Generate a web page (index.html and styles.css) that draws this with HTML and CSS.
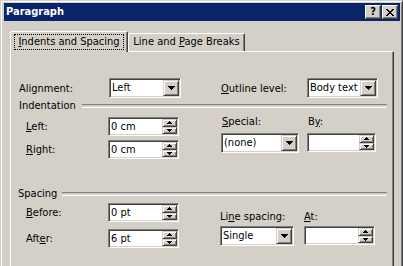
FILE: index.html
```html
<!DOCTYPE html>
<html>
<head>
<meta charset="utf-8">
<link rel="stylesheet" href="styles.css">
</head>
<body>
<div class="dlg">
  <div class="title">
    <span class="title-text">Paragraph</span>
    <div class="tbtns">
      <span class="tbtn help">?</span>
      <span class="tbtn"><svg width="8" height="7" viewBox="0 0 8 7"><path d="M0 0h2v1H0zM6 0h2v1H6zM1 1h2v1H1zM5 1h2v1H5zM2 2h4v1H2zM3 3h2v1H3zM2 4h4v1H2zM1 5h2v1H1zM5 5h2v1H5zM0 6h2v1H0zM6 6h2v1H6z" fill="#000"/></svg></span>
    </div>
  </div>
  <div class="body">
    <div class="tabs">
      <div class="tab active"><span class="focus"><u>I</u>ndents and Spacing</span></div>
      <div class="tab second">Line and <u>P</u>age Breaks</div>
    </div>
    <div class="page">
      <div class="row1">
        <span class="lbl w90">Alignment:</span>
        <div class="sel w72"><span class="val">Left</span><span class="dd"><svg width="7" height="4" viewBox="0 0 7 4"><path d="M0 0h7v1H0zM1 1h5v1H1zM2 2h3v1H2zM3 3h1v1H3z" fill="#000"/></svg></span></div>
        <span class="lbl outline"><u>O</u>utline level:</span>
        <div class="sel w71"><span class="val">Body text</span><span class="dd"><svg width="7" height="4" viewBox="0 0 7 4"><path d="M0 0h7v1H0zM1 1h5v1H1zM2 2h3v1H2zM3 3h1v1H3z" fill="#000"/></svg></span></div>
      </div>

      <div class="hdr hdr-ind">Indentation</div>

      <div class="sec sec-ind">
        <div class="lcol lcol-ind">
          <div class="lrow"><span class="lbl2"><u>L</u>eft:</span>
            <div class="spin w71"><span class="val">0 cm</span><span class="arr"><span class="sb"><svg width="5" height="3" viewBox="0 0 5 3"><path d="M2 0h1v1H2zM1 1h3v1H1zM0 2h5v1H0z" fill="#000"/></svg></span><span class="sb"><svg width="5" height="3" viewBox="0 0 5 3"><path d="M0 0h5v1H0zM1 1h3v1H1zM2 2h1v1H2z" fill="#000"/></svg></span></span></div>
          </div>
          <div class="lrow"><span class="lbl2"><u>R</u>ight:</span>
            <div class="spin w71"><span class="val">0 cm</span><span class="arr"><span class="sb"><svg width="5" height="3" viewBox="0 0 5 3"><path d="M2 0h1v1H2zM1 1h3v1H1zM0 2h5v1H0z" fill="#000"/></svg></span><span class="sb"><svg width="5" height="3" viewBox="0 0 5 3"><path d="M0 0h5v1H0zM1 1h3v1H1zM2 2h1v1H2z" fill="#000"/></svg></span></span></div>
          </div>
        </div>
        <div class="rcol rcol-ind">
          <div class="rlabels">
            <span class="lbl special"><u>S</u>pecial:</span>
            <span class="lbl by">B<u>y</u>:</span>
          </div>
          <div class="rctrls">
            <div class="sel w78"><span class="val">(none)</span><span class="dd"><svg width="7" height="4" viewBox="0 0 7 4"><path d="M0 0h7v1H0zM1 1h5v1H1zM2 2h3v1H2zM3 3h1v1H3z" fill="#000"/></svg></span></div>
            <div class="spin w69 gap8"><span class="val"></span><span class="arr"><span class="sb"><svg width="5" height="3" viewBox="0 0 5 3"><path d="M2 0h1v1H2zM1 1h3v1H1zM0 2h5v1H0z" fill="#000"/></svg></span><span class="sb"><svg width="5" height="3" viewBox="0 0 5 3"><path d="M0 0h5v1H0zM1 1h3v1H1zM2 2h1v1H2z" fill="#000"/></svg></span></span></div>
          </div>
        </div>
      </div>

      <div class="hdr hdr-sp">Spacing</div>

      <div class="sec sec-sp">
        <div class="lcol lcol-sp">
          <div class="lrow"><span class="lbl2"><u>B</u>efore:</span>
            <div class="spin w71"><span class="val">0 pt</span><span class="arr"><span class="sb"><svg width="5" height="3" viewBox="0 0 5 3"><path d="M2 0h1v1H2zM1 1h3v1H1zM0 2h5v1H0z" fill="#000"/></svg></span><span class="sb"><svg width="5" height="3" viewBox="0 0 5 3"><path d="M0 0h5v1H0zM1 1h3v1H1zM2 2h1v1H2z" fill="#000"/></svg></span></span></div>
          </div>
          <div class="lrow"><span class="lbl2">Aft<u>e</u>r:</span>
            <div class="spin w71"><span class="val">6 pt</span><span class="arr"><span class="sb"><svg width="5" height="3" viewBox="0 0 5 3"><path d="M2 0h1v1H2zM1 1h3v1H1zM0 2h5v1H0z" fill="#000"/></svg></span><span class="sb"><svg width="5" height="3" viewBox="0 0 5 3"><path d="M0 0h5v1H0zM1 1h3v1H1zM2 2h1v1H2z" fill="#000"/></svg></span></span></div>
          </div>
        </div>
        <div class="rcol rcol-sp">
          <div class="rlabels">
            <span class="lbl linesp">Li<u>n</u>e spacing:</span>
            <span class="lbl"><u>A</u>t:</span>
          </div>
          <div class="rctrls">
            <div class="sel w74"><span class="val">Single</span><span class="dd"><svg width="7" height="4" viewBox="0 0 7 4"><path d="M0 0h7v1H0zM1 1h5v1H1zM2 2h3v1H2zM3 3h1v1H3z" fill="#000"/></svg></span></div>
            <div class="spin w71 gap10"><span class="val"></span><span class="arr"><span class="sb"><svg width="5" height="3" viewBox="0 0 5 3"><path d="M2 0h1v1H2zM1 1h3v1H1zM0 2h5v1H0z" fill="#000"/></svg></span><span class="sb"><svg width="5" height="3" viewBox="0 0 5 3"><path d="M0 0h5v1H0zM1 1h3v1H1zM2 2h1v1H2z" fill="#000"/></svg></span></span></div>
          </div>
        </div>
      </div>
    </div>
  </div>
</div>
</body>
</html>
```
FILE: styles.css
```css
* { box-sizing: border-box; }
html, body { margin: 0; padding: 0; }
body {
  width: 403px;
  height: 266px;
  overflow: hidden;
  background: #d4d0c8;
  font-family: "DejaVu Sans Condensed", "DejaVu Sans", "Liberation Sans", sans-serif;
  font-size: 11px;
  color: #000;
}
u { text-decoration: underline; text-underline-offset: 1px; }

.dlg {
  width: 403px;
  height: 266px;
  border: 1px solid;
  border-bottom-width: 0;
  border-color: #d4d0c8 #404040 #404040 #d4d0c8;
  box-shadow: inset 1px 1px #fff, inset -1px 0 #808080;
  padding: 2px 2px 0 3px;
  background: #d4d0c8;
}

.title {
  height: 18px;
  background: #0a246a;
  display: flex;
  align-items: center;
  justify-content: space-between;
  padding: 0 2px 0 2px;
  color: #fff;
  font-weight: bold;
}
.title-text { line-height: 18px; }
.tbtns { display: flex; gap: 1px; }
.tbtn {
  width: 16px;
  height: 14px;
  background: #d4d0c8;
  border: 1px solid;
  border-color: #fff #404040 #404040 #fff;
  box-shadow: inset -1px -1px #808080;
  display: flex;
  align-items: center;
  justify-content: center;
  color: #000;
  font-size: 11px;
  line-height: 12px;
}

.body { padding: 10px 6px 0 6px; }

.tabs {
  display: flex;
  align-items: flex-end;
  height: 20px;
  position: relative;
  z-index: 1;
}
.tab {
  height: 18px;
  width: 117px;
  border: 1px solid;
  border-bottom: none;
  border-color: #fff #404040 transparent #fff;
  border-radius: 2px 2px 0 0;
  box-shadow: inset -1px 0 #808080;
  background: #d4d0c8;
  text-align: center;
  line-height: 16px;
}
.tab.active {
  width: 118px;
  height: 21px;
  margin-bottom: -1px;
  padding: 2px 3px 0 3px;
  line-height: 14px;
}
.focus {
  display: block;
  height: 16px;
  border: 1px dotted #000;
}

.page {
  height: 215px;
  border: 1px solid;
  border-bottom-width: 0;
  border-color: #fff #404040 #404040 #fff;
  box-shadow: inset -1px 0 #808080;
  padding: 26px 6px 0 8px;
}

.row1 { display: flex; align-items: center; height: 20px; }
.lbl { white-space: nowrap; }
.w90 { width: 90px; }
.outline { width: 86px; margin-left: 40px; }

.hdr {
  display: flex;
  height: 13px;
  line-height: 13px;
  white-space: nowrap;
}
.hdr::after {
  content: "";
  flex: 1;
  height: 2px;
  margin-top: 5px;
  margin-left: 6px;
  border-top: 1px solid #808080;
  border-bottom: 1px solid #fff;
}
.hdr-ind { margin-top: 1px; }
.hdr-sp { margin-top: 28px; margin-left: -1px; }
.hdr-sp::after { margin-left: 5px; }

.sec { display: flex; align-items: flex-start; }
.sec-ind { margin-top: 5px; }
.sec-sp { margin-top: 3px; }

.lcol { display: flex; flex-direction: column; }
.lcol-ind { width: 202px; gap: 4px; }
.lcol-sp { width: 201px; gap: 7px; }
.lrow { display: flex; align-items: center; height: 19px; }
.lbl2 { width: 89px; padding-left: 7px; white-space: nowrap; }

.rcol { display: flex; flex-direction: column; }
.rcol-ind { margin-top: -2px; }
.rcol-sp { margin-top: 7px; }
.rlabels { display: flex; height: 13px; line-height: 13px; }
.rctrls { display: flex; align-items: flex-start; }
.rcol-ind .rctrls { margin-top: 5px; }
.rcol-sp .rctrls { margin-top: 3px; }
.special { width: 86px; padding-left: 1px; }
.by { padding-left: 1px; }
.linesp { width: 84px; }
.gap8 { margin-left: 8px; }
.gap10 { margin-left: 10px; }

.sel, .spin {
  display: flex;
  border: 1px solid;
  border-color: #808080 #fff #fff #808080;
  box-shadow: inset 1px 1px #404040, inset -1px -1px #d4d0c8;
  padding: 1px;
  background: #fff;
}
.sel { height: 20px; }
.spin { height: 19px; }
.val { flex: 1; padding-left: 1px; line-height: 15px; white-space: nowrap; overflow: hidden; }
.sel .val { line-height: 16px; }
.w72 { width: 72px; }
.w71 { width: 71px; }
.w69 { width: 69px; }
.w78 { width: 78px; }
.w74 { width: 74px; }

.dd {
  width: 16px;
  background: #d4d0c8;
  border: 1px solid;
  border-color: #d4d0c8 #404040 #404040 #d4d0c8;
  box-shadow: inset 1px 1px #fff, inset -1px -1px #808080;
  display: flex;
  align-items: center;
  justify-content: center;
}
.dd svg, .sb svg { display: block; }

.arr { width: 15px; display: flex; flex-direction: column; }
.sb {
  flex: 1;
  background: #d4d0c8;
  border: 1px solid;
  border-color: #d4d0c8 #404040 #404040 #d4d0c8;
  box-shadow: inset 1px 1px #fff, inset -1px -1px #808080;
  display: flex;
  align-items: center;
  justify-content: center;
}
```
